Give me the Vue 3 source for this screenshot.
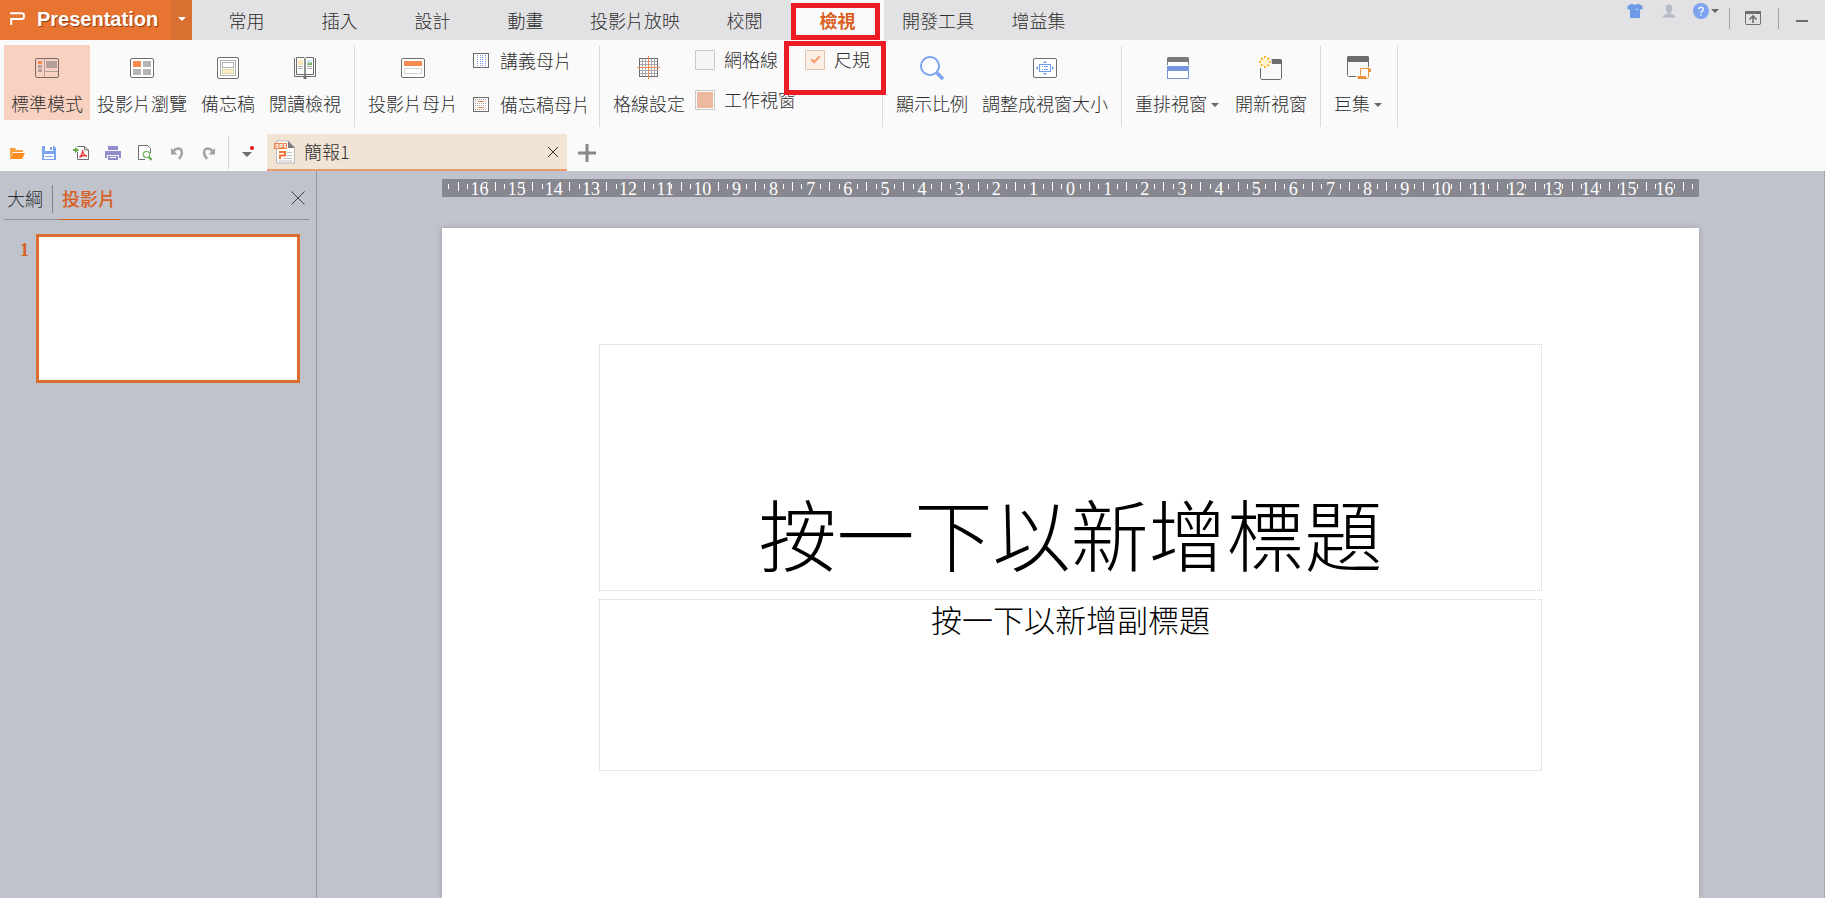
<script setup>
import { ref } from 'vue'

const tabs = ['常用', '插入', '設計', '動畫', '投影片放映', '校閱', '檢視', '開發工具', '增益集']
const activeTab = ref('檢視')
const gridlines = ref(false)
const ruler = ref(true)
const taskPane = ref(false)

const marks = Array.from({ length: 33 }, (_, i) => i - 16)
</script>

<template>
  <div class="app">
    <header class="topbar">
      <button class="brand" type="button">
        <svg class="brand-mark" viewBox="0 0 16 14" aria-hidden="true">
          <path d="M0 1.2H11.5Q14 1.2 14 3.5V4.5Q14 7 11.5 7H1.2V13" />
        </svg>
        <span>Presentation</span>
      </button>
      <button class="brand-more" type="button" aria-label="Menu"><i class="caret"></i></button>
      <nav class="tabs">
        <button
          v-for="t in tabs"
          :key="t"
          type="button"
          class="tab"
          :class="{ active: t === activeTab }"
          @click="activeTab = t"
        >{{ t }}</button>
      </nav>
      <div class="window-tools">
        <button type="button" class="skin" aria-label="Skin">
          <svg viewBox="0 0 16 16"><path fill="#6f9ae8" d="M4 1H6Q8 3 10 1H12L15.500 3V6.500H13V15H3V6.500H.5V3Z" /><path fill="#dfe8fa" d="M9 6h2v1H9z" /></svg>
        </button>
        <button type="button" class="user" aria-label="Account">
          <svg viewBox="0 0 16 16"><path fill="#b5bbc7" d="M8 1.500a3.600 3.600 0 0 1 3.400 3.700c0 1.800-.9 3-1.900 4v1.300c1 .8 5 1 5 4H1.500c0-3 4-3.200 5-4V9.200c-1-1-1.900-2.200-1.900-4A3.600 3.600 0 0 1 8 1.500Z" /></svg>
        </button>
        <button type="button" class="help" aria-label="Help">
          <svg viewBox="0 0 16 16"><circle cx="8" cy="8" r="8" fill="#7ba3ef" /><path d="M5.700 6.300Q5.700 4.200 8 4.200T10.300 6.200Q10.300 7.300 9 8Q8 8.500 8 10M8 11.200V12.800" fill="none" stroke="#e8effc" stroke-width="1.600" /></svg>
          <i class="caret dark"></i>
        </button>
        <span class="bar"></span>
        <button type="button" class="collapse" aria-label="Collapse ribbon">
          <svg viewBox="0 0 16 16"><rect x=".5" y="1.500" width="15" height="13" rx="1" fill="none" stroke="#6d6d6d" /><path fill="#6d6d6d" d="M0 1h16v3H0z" /><path d="M8 13V7M4.500 9.500L8 6l3.500 3.500" fill="none" stroke="#6d6d6d" stroke-width="1.600" /></svg>
        </button>
        <span class="bar"></span>
        <button type="button" class="minimise" aria-label="Minimise"><i></i></button>
      </div>
    </header>

    <section class="ribbon">
      <div class="group">
        <button type="button" class="big on">
          <svg viewBox="0 0 24 24">
            <rect x=".5" y="2.500" width="23" height="19" rx="1.500" fill="none" stroke="#7a6a66" />
            <path fill="#f78b50" d="M3 5h4v3H3z" />
            <path fill="#b3a09a" d="M3 9h4v3H3zM3 13h4v3H3zM11 5h11v7H11z" />
            <path stroke="#b3a09a" d="M9.500 3v18M10 15.500h13" />
          </svg>
          <span>標準模式</span>
        </button>
        <button type="button" class="big">
          <svg viewBox="0 0 24 24">
            <rect x=".5" y="2.500" width="23" height="19" rx="1.500" fill="#fff" stroke="#6d6d6d" />
            <path fill="#f78b50" d="M3 5h8v6H3z" />
            <path fill="#b5b5b5" d="M13 5h8v6h-8zM3 13h8v6H3zM13 13h8v6h-8z" />
          </svg>
          <span>投影片瀏覽</span>
        </button>
        <button type="button" class="big">
          <svg viewBox="0 0 24 24">
            <rect x="1.500" y="1.500" width="21" height="21" rx="1.500" fill="#fff" stroke="#6d6d6d" />
            <rect x="4.500" y="4.500" width="15" height="15" fill="none" stroke="#b0b0b0" />
            <rect x="6.500" y="6.500" width="11" height="5" fill="#fff" stroke="#b0b0b0" />
            <rect x="6.500" y="13.500" width="11" height="4" fill="#fdf0c4" stroke="#c4b184" stroke-dasharray="1 1" />
          </svg>
          <span>備忘稿</span>
        </button>
        <button type="button" class="big">
          <svg viewBox="0 0 24 24">
            <path d="M1.500 2V20.500H22.500V2" fill="none" stroke="#6d6d6d" />
            <path d="M3.500 1.500H11L12 2.500L13 1.500H20.500V18.500H3.500Z" fill="#fff" stroke="#6d6d6d" />
            <path d="M12 2.500V20" stroke="#6d6d6d" stroke-width="1.500" />
            <path d="M10.500 21h3v2h-3z" fill="#6d6d6d" />
            <path fill="#fbe7b4" d="M5 4h5v5H5z" />
            <path fill="#dbe7fb" d="M14 4h5v5h-5z" />
            <path fill="#76b35a" d="M14 9l2-3 1 1.500L19 6v3z" />
            <path stroke="#b0b0b0" d="M5 10.500h5M5 12.500h5M14 10.500h5M14 12.500h5" />
          </svg>
          <span>閱讀檢視</span>
        </button>
      </div>

      <div class="group">
        <button type="button" class="big">
          <svg viewBox="0 0 24 24">
            <rect x=".5" y="2.500" width="23" height="19" rx="1.500" fill="#fff" stroke="#6d6d6d" />
            <path fill="#f78b50" d="M3 5h18v5H3z" />
            <rect x="3.500" y="12.500" width="17" height="5" fill="none" stroke="#a8a8a8" stroke-dasharray="1 1" />
          </svg>
          <span>投影片母片</span>
        </button>
        <div class="stack">
          <button type="button" class="small">
            <svg viewBox="0 0 16 16">
              <rect x=".5" y=".5" width="15" height="14" fill="#fff" stroke="#6d6d6d" />
              <path d="M4.500 2v11M7.500 2v11M9.500 2v11M12.500 2v11" stroke="#7d9ee4" stroke-dasharray="1 1" />
            </svg>
            <span>講義母片</span>
          </button>
          <button type="button" class="small">
            <svg viewBox="0 0 16 16">
              <rect x=".5" y=".5" width="15" height="14" fill="#fff" stroke="#6d6d6d" />
              <path d="M2 2.500h12M2 6.500h12M2 8.500h12M2 12.500h12" stroke="#a8a8a8" stroke-dasharray="1 1" />
              <path d="M2 4.500h2M2 10.500h2M12 4.500h2M12 10.500h2" stroke="#a8a8a8" stroke-dasharray="1 1" />
              <path d="M5 4.500h6M5 10.500h6" stroke="#f0874f" />
            </svg>
            <span>備忘稿母片</span>
          </button>
        </div>
      </div>

      <div class="group">
        <button type="button" class="big">
          <svg viewBox="0 0 24 24">
            <path fill="#fff" d="M2.500 2.500h18v18h-18z" />
            <path d="M5.500 3v18M8.500 3v18M14.500 3v18M17.500 3v18M3 5.500h18M3 8.500h18M3 14.500h18M3 17.500h18" stroke="#a8a8a8" />
            <rect x="2.500" y="2.500" width="18" height="18" stroke="#6d6d6d" />
            <path d="M11.500 0v23M0 11.500h23" stroke="#f0874f" />
          </svg>
          <span>格線設定</span>
        </button>
        <div class="checks">
          <label class="check"><input v-model="gridlines" type="checkbox" /><span>網格線</span></label>
          <label class="check noted"><input v-model="ruler" type="checkbox" /><span>尺規</span></label>
          <label class="check"><input v-model="taskPane" type="checkbox" class="partial" /><span>工作視窗</span></label>
        </div>
      </div>

      <div class="group">
        <button type="button" class="big">
          <svg viewBox="0 0 24 24">
            <circle cx="10" cy="10" r="9" fill="#fff" stroke="#7ba3ef" stroke-width="2" />
            <path d="M17 17l6 6" stroke="#7ba3ef" stroke-width="3.500" />
          </svg>
          <span>顯示比例</span>
        </button>
        <button type="button" class="big">
          <svg viewBox="0 0 24 24">
            <rect x=".5" y="2.500" width="23" height="19" rx="1.500" fill="#fff" stroke="#6d6d6d" />
            <rect x="6.500" y="8.500" width="11" height="7" fill="none" stroke="#6f9ae8" />
            <path fill="#6f9ae8" d="M10 7l2-2 2 2zM10 17l2 2 2-2zM5 10l-2 2 2 2zM19 10l2 2-2 2z" />
            <path d="M9 10.500h1M11 10.500h4M9 13.500h1M11 13.500h4" stroke="#6f9ae8" />
          </svg>
          <span>調整成視窗大小</span>
        </button>
      </div>

      <div class="group">
        <button type="button" class="big menu">
          <svg viewBox="0 0 24 24">
            <path fill="#fff" d="M1 2h22v8H1z" />
            <path d="M1.500 9V5M22.500 9V5" stroke="#7a7a7a" />
            <path fill="#7a7a7a" d="M1 2l1-1h20l1 1v4H1z" />
            <rect x="1.500" y="11.500" width="21" height="11" fill="#fff" stroke="#7796dc" />
            <path fill="#7796dc" d="M1 10h22v5H1z" />
          </svg>
          <span>重排視窗<i class="caret dark"></i></span>
        </button>
        <button type="button" class="big">
          <svg viewBox="0 0 24 24">
            <path d="M1.500 12V22L2.500 23.500H21.500L22.500 22.500V5" fill="none" stroke="#6d6d6d" />
            <path fill="#6d6d6d" d="M12.500 3H22l1 1v4H13z" />
            <circle cx="6" cy="6" r="3.500" fill="#fdf3cf" />
            <path d="M6 0v2M6 10v2M0 6h2M10 6h2M2 2l1.500 1.500M8.500 8.500L10 10M10 2L8.500 3.500M3.500 8.500L2 10" stroke="#fbb725" stroke-width="2" />
          </svg>
          <span>開新視窗</span>
        </button>
      </div>

      <div class="group">
        <button type="button" class="big menu">
          <svg viewBox="0 0 24 24">
            <path d="M.5 5V19.500L1.500 20.500H9M21.500 5V11" fill="none" stroke="#6d6d6d" />
            <path fill="#6d6d6d" d="M0 1l1-1h20l1 1v5H0z" />
            <path d="M13.500 19.500V12.500H22.500L23.500 13.500V15.500H21.500V21L20 22.500H11.500" fill="#fff" stroke="#e8923c" />
            <path fill="#e8923c" d="M10 20h9v3h-8zM21 12l3 1v3h-3z" />
          </svg>
          <span>巨集<i class="caret dark"></i></span>
        </button>
      </div>
    </section>

    <section class="docbar">
      <div class="quick">
        <button type="button" aria-label="Open">
          <svg viewBox="0 0 16 16"><path fill="#f7a13c" d="M1 3h5l1.500 2H14v2H4L1 13z" /><path fill="#fb8c1e" d="M4 8h12l-3 6H1z" /></svg>
        </button>
        <button type="button" aria-label="Save">
          <svg viewBox="0 0 16 16"><path fill="#7ba3ef" d="M1 1h12l2 2v12H1z" /><path fill="#fff" d="M4 1h8v5H4zM3 9h10v5H3z" /><path fill="#7ba3ef" d="M9 2h2v3H9zM4 11h8v1H4z" /></svg>
        </button>
        <button type="button" aria-label="Export PDF">
          <svg viewBox="0 0 16 16"><path d="M4.500 2V1.500H11.500L15.500 5V14.500H4.500V7" fill="#fff" stroke="#6d6d6d" /><path d="M11.500 1.500V5h4" fill="none" stroke="#6d6d6d" /><path d="M0 4h2V2l4 3-4 3V6H0z" fill="#62a744" /><path d="M6.500 12.500Q10 9 9.500 5Q10 10 14 11Q10 9.500 6.500 12.500Z" fill="none" stroke="#e8373a" stroke-width="1.300" /></svg>
        </button>
        <button type="button" aria-label="Print">
          <svg viewBox="0 0 16 16"><path fill="#918dcc" d="M3 1h10v4H3zM0 6h16v7h-2v-3H2v3H0zM3 11h10v4H3z" /><path stroke="#fff" d="M5 12.500h6" /></svg>
        </button>
        <button type="button" aria-label="Print preview">
          <svg viewBox="0 0 16 16"><path d="M8 14.500H1.500V.5H10.500L13.500 3.500V8" fill="#fff" stroke="#6d6d6d" /><circle cx="9.500" cy="9.500" r="3.200" fill="#fff" stroke="#7bb565" stroke-width="1.300" /><path d="M12 12l2.500 3" stroke="#62a744" stroke-width="2" /></svg>
        </button>
        <button type="button" aria-label="Undo">
          <svg viewBox="0 0 16 16"><path d="M4 6.500Q8 2 11.500 4.200Q15 8 10 14" stroke="#a2a2a2" stroke-width="2.500" /><path fill="#a2a2a2" d="M2 3v6.500h6.500z" /></svg>
        </button>
        <button type="button" aria-label="Redo">
          <svg viewBox="0 0 16 16"><path d="M12 6.500Q8 2 4.500 4.200Q1 8 6 14" stroke="#a2a2a2" stroke-width="2.500" /><path fill="#a2a2a2" d="M14 3v6.500H7.500z" /></svg>
        </button>
      </div>
      <button type="button" class="customise" aria-label="Customise toolbar">
        <svg viewBox="0 0 14 16"><path fill="#6d6d6d" d="M1 7h10l-5 5z" /><circle cx="11" cy="3" r="2" fill="#f20d0d" /></svg>
      </button>
      <div class="doc">
        <svg class="doc-icon" viewBox="0 0 22 24">
          <path d="M2.500 1H14.500L20.500 7V23H2.500Z" fill="#fff" stroke="#b9b9b9" />
          <path d="M14 1l7 7h-7z" fill="#7b7b7b" />
          <rect x="0" y="3" width="13" height="6" fill="#f08147" />
          <path d="M2 4.500h2v3H2zM6 7.500v-3h2v2H6M12 4.500h-2v1.500h1.500v1.500H10" fill="none" stroke="#fff" />
          <path d="M5 12h6v3.500H6V19" fill="none" stroke="#f07430" stroke-width="2" />
          <path d="M13 12.500h5M13 15.500h5M9 18.500h9M5 21h13" stroke="#c2c2c2" />
        </svg>
        <span>簡報1</span>
        <button type="button" aria-label="Close document">
          <svg viewBox="0 0 12 12"><path d="M1 1l10 10M11 1L1 11" stroke="#333" /></svg>
        </button>
      </div>
      <button type="button" class="add" aria-label="New document">
        <svg viewBox="0 0 18 18"><path d="M9 0v18M0 9h18" stroke="#888" stroke-width="3" /></svg>
      </button>
    </section>

    <main class="work">
      <aside class="panel">
        <div class="panel-head">
          <button type="button" class="outline">大綱</button>
          <button type="button" class="slides">投影片</button>
          <button type="button" class="close" aria-label="Close panel">
            <svg viewBox="0 0 14 14"><path d="M.5 .5l13 13M13.500 .5l-13 13" stroke="#444" /></svg>
          </button>
        </div>
        <div class="thumb-row">
          <span class="num">1</span>
          <button type="button" class="thumb" aria-label="Slide 1"></button>
        </div>
      </aside>

      <section class="stage">
        <div class="ruler">
          <div class="edge start"><i></i><i class="short"></i></div>
          <div v-for="n in marks" :key="n" class="cm">
            <i class="long"></i><i class="short"></i><i></i><i class="short"></i>
            <span :class="{ wide: n < -9 }">{{ Math.abs(n) }}</span>
          </div>
          <div class="edge"><i class="long"></i><i class="short"></i></div>
        </div>
        <article class="slide">
          <h1 class="title">按一下以新增標題</h1>
          <p class="subtitle">按一下以新增副標題</p>
        </article>
      </section>
    </main>
  </div>
</template>

<style>
body {
  margin: 0;
  overflow: hidden;
}
</style>

<style scoped>
.app {
  display: flex;
  flex-direction: column;
  height: 100vh;
  overflow: hidden;
  background: #c0c2cc;
  color: #2e2e2e;
  font: 300 18px/26px "Noto Sans CJK TC", sans-serif;
}
button {
  margin: 0;
  padding: 0;
  border: 0;
  background: none;
  color: inherit;
  font: inherit;
  white-space: nowrap;
}
svg {
  display: block;
  fill: none;
}
.caret {
  display: inline-block;
  border: 4px solid transparent;
  border-top-color: #fff;
  border-bottom: 0;
}
.caret.dark {
  border-top-color: #666;
}

.topbar {
  display: flex;
  flex: none;
  height: 40px;
  background: #e2e2e4;
}
.brand {
  display: flex;
  align-items: center;
  gap: 11px;
  width: 171px;
  padding: 0 0 2px 10px;
  background: #e87432;
  color: #fff;
  font: bold 20px/24px "Liberation Sans", Arial, sans-serif;
  text-shadow: 1px 1px 1px #8a3f14;
}
.brand-mark {
  width: 16px;
  height: 14px;
  stroke: #fff;
  stroke-width: 2;
}
.brand-more {
  display: flex;
  align-items: center;
  justify-content: center;
  width: 21px;
  padding-bottom: 2px;
  background: #d96f30;
}
.tabs {
  display: flex;
  margin-left: 8px;
}
.tab {
  min-width: 93px;
  padding: 0 18px;
}
.tab.active {
  position: relative;
  background: #fafafa;
  color: #d95f1e;
  font-weight: 700;
}
.tab.active::after {
  content: "";
  position: absolute;
  inset: 3px 4px 0 0;
  border: 5px solid #ed1c24;
}
.window-tools {
  display: flex;
  align-items: flex-start;
  margin-left: auto;
  padding-right: 17px;
}
.window-tools svg {
  width: 16px;
  height: 16px;
}
.skin {
  margin: 3px 18px 0 0;
}
.user {
  margin: 3px 16px 0 0;
}
.help {
  display: flex;
  gap: 2px;
  margin: 3px 10px 0 0;
}
.help .caret {
  margin-top: 6px;
}
.window-tools .bar {
  width: 1px;
  height: 21px;
  margin-top: 8px;
  background: #a3a3a3;
}
.collapse {
  margin: 10px 17px 0 15px;
}
.minimise {
  margin: 20px 0 0 17px;
}
.minimise i {
  display: block;
  width: 12px;
  height: 2px;
  background: #6d6d6d;
}

.ribbon {
  display: flex;
  flex: none;
  height: 94px;
  background: #fafafa;
}
.group {
  display: flex;
  align-items: flex-start;
  margin-top: 6px;
  height: 81px;
  padding: 0 6px;
  border-right: 1px solid #dadada;
}
.group:first-child {
  padding-left: 4px;
}
.big {
  display: flex;
  flex-direction: column;
  align-items: center;
  gap: 10px;
  margin-top: -1px;
  padding: 11px 7px 4px;
}
.big svg {
  width: 24px;
  height: 24px;
}
.big.on {
  background: #f9d1c1;
}
.big .caret {
  margin: 0 2px 3px 4px;
  vertical-align: middle;
}
.stack {
  display: flex;
  flex-direction: column;
  gap: 16px;
  padding: 1px 3px 0 8px;
}
.small {
  display: flex;
  align-items: center;
  gap: 11px;
}
.small svg {
  width: 16px;
  height: 16px;
}
.small span,
.check span,
.doc span {
  padding-bottom: 2px;
}
.checks {
  display: grid;
  grid-template-columns: 110px 74px;
  gap: 12px 0;
  padding-left: 3px;
  width: 181px;
}
.check {
  display: flex;
  align-items: center;
  gap: 9px;
  white-space: nowrap;
}
.check input {
  appearance: none;
  display: grid;
  place-items: center;
  box-sizing: border-box;
  width: 20px;
  height: 20px;
  margin: 0;
  border: 1px solid #c8c8c8;
  background: #f5f5f5;
}
.check input:checked {
  border-color: #e2c3b0;
  background: #fdeee5;
}
.check input:checked::before {
  content: "";
  width: 7px;
  height: 3px;
  margin-bottom: 3px;
  border: solid #f79a66;
  border-width: 0 0 2px 2px;
  transform: rotate(-45deg);
}
.check .partial {
  background: #ecb99f;
  box-shadow: inset 0 0 0 1px #fafafa;
}
.noted {
  position: relative;
}
.noted::after {
  content: "";
  position: absolute;
  inset: -5px -7px -21px -21px;
  border: 5px solid #ed1c24;
}

.docbar {
  display: flex;
  flex: none;
  height: 37px;
  background: #fafafa;
}
.quick {
  display: flex;
  align-items: center;
  gap: 16px;
  margin: 2px 0;
  padding: 0 11px 0 9px;
  border-right: 1px solid #d6d6d6;
}
.quick svg {
  width: 16px;
  height: 16px;
}
.customise {
  padding: 0 12px;
}
.customise svg {
  width: 14px;
  height: 16px;
}
.doc {
  display: flex;
  align-items: center;
  box-sizing: border-box;
  width: 300px;
  padding: 0 8px 0 7px;
  border-bottom: 2px solid #e99b6d;
  background: #f1e4d4;
}
.doc-icon {
  width: 22px;
  height: 24px;
  margin-right: 8px;
}
.doc button {
  margin-left: auto;
}
.doc button svg {
  width: 12px;
  height: 12px;
}
.add {
  margin-left: 11px;
}
.add svg {
  width: 18px;
  height: 18px;
}

.work {
  display: flex;
  flex: 1;
  min-height: 0;
}
.panel {
  box-sizing: border-box;
  flex: none;
  width: 317px;
  padding: 14px 7px 0 4px;
  border-right: 1px solid #9395a1;
}
.panel-head {
  display: flex;
  align-items: stretch;
  height: 34px;
  border-bottom: 1px solid #8f919d;
}
.outline {
  height: 28px;
  padding: 0 9px 2px 3px;
  border-right: 1px solid #80828c;
}
.slides {
  margin: 0 0 -1px 6px;
  padding: 0 4px 8px 3px;
  border-bottom: 1px solid #d95f1e;
  color: #d95f1e;
  font-weight: 500;
}
.close {
  align-self: flex-start;
  margin: 6px 4px 0 auto;
}
.close svg {
  width: 14px;
  height: 14px;
}
.thumb-row {
  display: flex;
  padding: 14px 9px 0 16px;
}
.num {
  width: 16px;
  padding-top: 4px;
  color: #d4621f;
  font: bold 18px/24px "Liberation Serif", serif;
}
.thumb {
  flex: 1;
  height: 149px;
  border: 3px solid #d96f2f;
  background: #fff;
}

.stage {
  display: flex;
  flex: 1;
  flex-direction: column;
  min-width: 0;
  padding: 8px 125px 0;
  border-right: 1px solid #a5a7b1;
}
.ruler {
  display: flex;
  flex: none;
  height: 18px;
  margin-bottom: 31px;
  background: #87878f;
  color: #fff;
  font: 18px/20px "Liberation Serif", serif;
}
.cm {
  display: grid;
  flex: 100 1 0;
  grid-template-columns: repeat(4, minmax(0, 1fr));
  min-width: 0;
}
.cm i:nth-child(1) {
  grid-column: 1;
}
.cm i:nth-child(2) {
  grid-column: 2;
}
.cm i:nth-child(3) {
  grid-column: 3;
}
.cm i:nth-child(4) {
  grid-column: 4;
}
.edge {
  display: flex;
  flex: 43 1 0;
}
.edge i {
  flex: 18;
}
.edge i:first-child {
  flex: 25;
}
.edge.start i:first-child {
  flex: 18;
}
.edge.start i:last-child {
  flex: 25;
}
.ruler i {
  grid-row: 1;
  box-sizing: border-box;
}
.ruler .long,
.ruler .short {
  height: 9px;
  margin-top: 3px;
  border-left: 1px solid #fff;
}
.ruler .short {
  height: 5px;
  margin-top: 5px;
}
.cm span {
  grid-area: 1 / 1 / 2 / 5;
  justify-self: center;
}
.cm .wide {
  padding-left: 6px;
}
.slide {
  flex: 1;
  padding: 116px 12.5% 0;
  background: #fff;
  box-shadow: 0 0 6px #9a9ca8;
  color: #000;
  text-align: center;
}
.title,
.subtitle {
  box-sizing: border-box;
  margin: 0;
  border: 1px dotted #cfcfcf;
}
.title {
  display: flex;
  align-items: flex-end;
  justify-content: center;
  height: 247px;
  padding-bottom: 12px;
  font-size: 78px;
  font-weight: 300;
  line-height: 92px;
}
.subtitle {
  height: 172px;
  margin-top: 8px;
  font-size: 31px;
  line-height: 38px;
}
</style>
